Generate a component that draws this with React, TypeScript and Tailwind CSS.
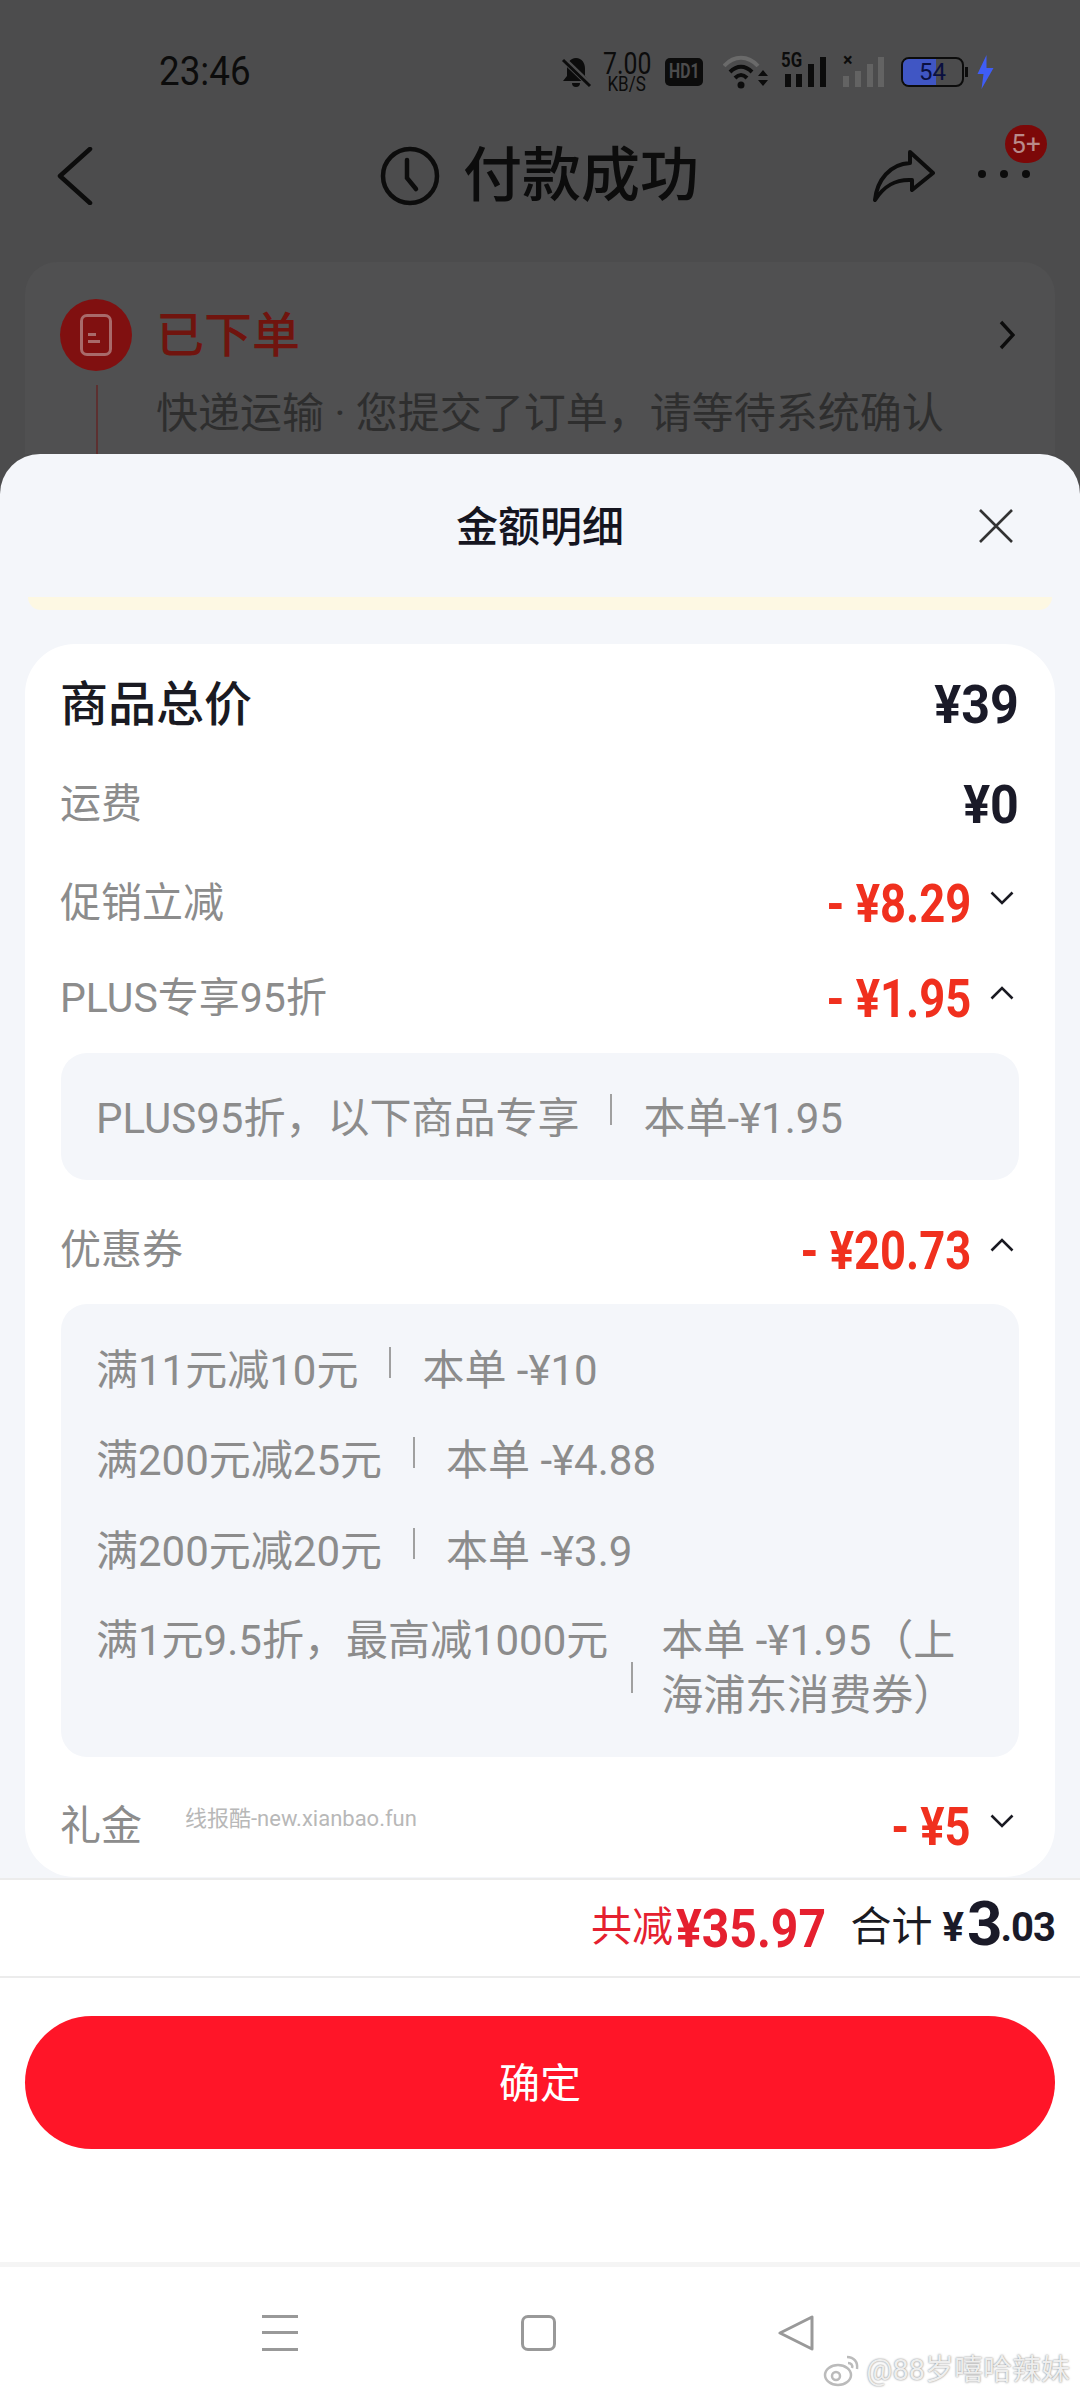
import React from 'react';

const Chevron = ({ up }: { up?: boolean }) => (
  <svg width="24" height="14" viewBox="0 0 24 14" fill="none" stroke="#1a1a22" strokeWidth="2.6" className="ml-[19px] mr-[5px] mt-[-8px]">
    <path d={up ? 'M1.5 12.5 12 2l10.5 10.5' : 'M1.5 1.5 12 12 22.5 1.5'} />
  </svg>
);

const Row = ({ label, value, up, black, big, children }: { label: string; value: string; up?: boolean; black?: boolean; big?: boolean; children?: React.ReactNode }) => (
  <div className="flex h-full items-center justify-between">
    <div className="ml-[-1px] flex items-center">
      <span className={big ? 'pt-[3px] text-[48px] font-medium text-[#1a1a22]' : 'pt-[3px] text-[41px] text-[#8c8c8c]'}>{label}</span>
      {children}
    </div>
    <div className="flex items-center">
      <span className={`origin-right pt-[2px] text-[54px] font-bold ${black ? 'scale-x-[0.93] text-[#1a1a28]' : 'scale-x-[0.84] text-[#f0301e]'}`}>{value}</span>
      {!black && <Chevron up={up} />}
    </div>
  </div>
);

const Sep = ({ low }: { low?: boolean }) => (
  <div className={`h-[31px] w-[2px] shrink-0 bg-[#a0a0a0] ${low ? 'ml-[23px] mr-[28px] mt-[18px]' : 'mx-[31px] mt-[-14px]'}`} />
);

const Coupon = ({ left, right }: { left: string; right: string }) => (
  <div className="flex h-[60px] items-center text-[42px] text-[#8c8c8c]">
    <span className="pt-[3px]">{left}</span>
    <Sep />
    <span className="pt-[3px]">{right}</span>
  </div>
);

const StatusBar = () => (
  <div className="flex h-[144px] items-center pl-[159px] pr-[85px] text-[#0c0c0c]">
    <span className="origin-left scale-x-[0.92] text-[40px]">23:46</span>
    <div className="ml-auto flex items-center">
      <svg width="34" height="36" viewBox="0 0 34 34" fill="#0c0c0c">
        <path d="M17 3c-6 0-9 5-9 11v7l-4 5h26l-4-5v-7c0-6-3-11-9-11zM13 28a4 4 0 0 0 8 0z" />
        <path d="M4 4l27 26" stroke="#4c4c4d" strokeWidth="6" />
        <path d="M4 5l27 26" stroke="#0c0c0c" strokeWidth="3" />
      </svg>
      <div className="ml-[9px] flex w-[50px] flex-col items-center leading-none">
        <span className="scale-x-[0.8] text-[31px] leading-[24px]">7.00</span>
        <span className="scale-x-[0.85] text-[20px] leading-[17px]">KB/S</span>
      </div>
      <div className="ml-[13px] flex h-[28px] w-[38px] items-center justify-center rounded-[5px] bg-[#0c0c0c] text-[21px] font-bold text-[#4c4c4d]">
        <span className="scale-x-[0.75]">HD1</span>
      </div>
      <svg width="46" height="34" viewBox="0 0 46 34" fill="none" className="ml-[20px]">
        <path d="M1 11C11 0 25 0 35 11" stroke="#6a6a6a" strokeWidth="4" />
        <path d="M7 17c7-7 15-7 22 0" stroke="#0c0c0c" strokeWidth="4" />
        <path d="M12 23c4-4 8-4 12 0" stroke="#0c0c0c" strokeWidth="4" />
        <circle cx="18" cy="30" r="3.5" fill="#0c0c0c" />
        <path d="M35 21l5-6 5 6zM35 25l5 6 5-6z" fill="#0c0c0c" />
      </svg>
      <div className="relative ml-[12px] h-[34px] w-[48px]">
        <span className="absolute left-0 top-[-5px] origin-left scale-x-[0.8] text-[21px] font-bold leading-[20px]">5G</span>
        <svg width="48" height="34" viewBox="0 0 48 34" fill="#0c0c0c">
          <rect x="4" y="19" width="6" height="13" /><rect x="15" y="19" width="6" height="13" /><rect x="27" y="9" width="6" height="23" /><rect x="39" y="2" width="6" height="30" />
        </svg>
      </div>
      <div className="relative ml-[13px] h-[34px] w-[44px]">
        <span className="absolute left-[1px] top-[-4px] text-[18px] font-bold leading-[18px]">×</span>
        <svg width="44" height="34" viewBox="0 0 44 34" fill="#636363">
          <rect x="1" y="21" width="6" height="11" /><rect x="13" y="16" width="6" height="16" /><rect x="25" y="9" width="6" height="23" /><rect x="36" y="2" width="6" height="30" />
        </svg>
      </div>
      <div className="relative ml-[15px] flex h-[30px] w-[63px] items-center justify-center overflow-hidden rounded-[8px] border-2 border-[#0c0c0c]">
        <div className="absolute inset-y-0 left-0 w-[33px] bg-[#4056c4]" />
        <span className="relative text-[24px] leading-none text-[#0a1040]">54</span>
      </div>
      <div className="ml-[1px] h-[10px] w-[3px] bg-[#0c0c0c]" />
      <svg width="19" height="34" viewBox="0 0 18 34" fill="#3f5df5" className="ml-[8px]">
        <path d="M10 0 1 19h6l-2 15L17 13h-7z" />
      </svg>
    </div>
  </div>
);

const NavBar = () => (
  <div className="relative flex h-[64px] items-center">
    <svg width="36" height="58" viewBox="0 0 36 58" fill="none" stroke="#0c0c0c" strokeWidth="4.5" strokeLinecap="round" strokeLinejoin="round" className="ml-[57px]">
      <path d="M33 2 3 29l30 27" />
    </svg>
    <svg width="60" height="60" viewBox="0 0 60 60" fill="none" stroke="#0c0c0c" strokeWidth="4.5" strokeLinecap="round" className="ml-[287px]">
      <circle cx="30" cy="30" r="27" />
      <path d="M27 14v18l9 11" />
    </svg>
    <span className="ml-[23px] text-[59px] font-medium text-[#0c0c0c]">付款成功</span>
    <svg width="62" height="52" viewBox="0 0 62 52" fill="none" stroke="#0c0c0c" strokeWidth="4" strokeLinejoin="round" className="ml-[174px]">
      <path d="M37 2 60 23 39 40V30C22 29 11 36 2 50 4 30 17 14 37 13z" />
    </svg>
    <div className="ml-[43px] mt-[-5px] flex gap-[14px]">
      <div className="h-[8px] w-[8px] rounded-full bg-[#0c0c0c]" />
      <div className="h-[8px] w-[8px] rounded-full bg-[#0c0c0c]" />
      <div className="h-[8px] w-[8px] rounded-full bg-[#0c0c0c]" />
    </div>
    <div className="absolute left-[1005px] top-[-19px] flex h-[38px] w-[42px] items-center justify-center rounded-full bg-[#7c0808] text-[26px] leading-none text-[#b98a8a]">5+</div>
  </div>
);

export default function App() {
  return (
    <div className="flex h-[2400px] w-[1080px] flex-col overflow-hidden bg-[#4c4c4d] font-[Roboto,'Noto_Sans_CJK_SC',sans-serif]">
      <div className="h-[454px] shrink-0 overflow-hidden">
        <StatusBar />
        <NavBar />
        <div className="mx-[25px] mt-[54px] h-[300px] rounded-t-[32px] bg-[#505051] pr-[40px] pt-[36px]">
          <div className="flex items-center pl-[35px]">
            <div className="flex h-[72px] w-[72px] items-center justify-center rounded-full bg-[#801010]">
              <div className="flex h-[42px] w-[32px] flex-col justify-center gap-[4px] rounded-[7px] border-[3px] border-[#a86a6a] pl-[5px] pt-[6px]">
                <div className="h-[3px] w-[8px] bg-[#a86a6a]" />
                <div className="h-[3px] w-[12px] bg-[#a86a6a]" />
              </div>
            </div>
            <span className="ml-[24px] pt-[2px] text-[48px] font-medium text-[#70140e]">已下单</span>
            <svg width="16" height="30" viewBox="0 0 16 30" fill="none" stroke="#0c0c0c" strokeWidth="3.4" className="ml-auto">
              <path d="M2 2l12 13L2 28" />
            </svg>
          </div>
          <div className="mt-[13px] flex">
            <div className="ml-[71px] h-[80px] w-[2px] bg-[#5c3030]" />
            <span className="ml-[58px] pt-[4px] text-[42px] leading-[50px] text-[#2e2e2e]">快递运输 · 您提交了订单，请等待系统确认</span>
          </div>
        </div>
      </div>

      <div className="flex flex-1 flex-col overflow-hidden rounded-t-[40px] bg-[#f4f6fa]">
        <div className="relative flex h-[143px] shrink-0 items-center justify-center pt-[3px]">
          <span className="text-[42px] font-medium text-[#15151f]">金额明细</span>
          <svg width="34" height="34" viewBox="0 0 34 34" fill="none" stroke="#333" strokeWidth="2.6" className="absolute right-[67px] top-[55px]">
            <path d="M1 1l32 32M33 1 1 33" />
          </svg>
        </div>
        <div className="mx-[28px] h-[13px] shrink-0 rounded-b-[13px] bg-[#fdf8e3]" />

        <div className="mx-[25px] mt-[34px] shrink-0 rounded-[50px] bg-white px-[36px] pb-[7px] pt-[9px]">
          <div className="h-[100px]"><Row label="商品总价" value="¥39" black big /></div>
          <div className="h-[100px]"><Row label="运费" value="¥0" black /></div>
          <div className="h-[98px]"><Row label="促销立减" value="- ¥8.29" /></div>
          <div className="h-[92px]"><Row label="PLUS专享95折" value="- ¥1.95" up /></div>
          <div className="mt-[10px] flex h-[127px] items-center rounded-[26px] bg-[#f4f6fa] px-[35px] text-[42px] text-[#8c8c8c]">
            <span className="pt-[3px]">PLUS95折，以下商品专享</span>
            <Sep />
            <span className="pt-[3px]">本单-¥1.95</span>
          </div>
          <div className="mt-[24px] h-[90px]"><Row label="优惠券" value="- ¥20.73" up /></div>
          <div className="mt-[10px] h-[453px] rounded-[26px] bg-[#f4f6fa] px-[35px] pt-[35px]">
            <Coupon left="满11元减10元" right="本单 -¥10" />
            <div className="mt-[30px]"><Coupon left="满200元减25元" right="本单 -¥4.88" /></div>
            <div className="mt-[31px]"><Coupon left="满200元减20元" right="本单 -¥3.9" /></div>
            <div className="mt-[33px] flex items-center text-[42px] leading-[55px] text-[#8c8c8c]">
              <span className="mt-[-55px] shrink-0">满1元9.5折，最高减1000元</span>
              <Sep low />
              <span>本单 -¥1.95（上海浦东消费券）</span>
            </div>
          </div>
          <div className="mt-[23px] h-[90px]">
            <Row label="礼金" value="- ¥5">
              <span className="ml-[43px] mt-[-14px] text-[22px] text-[#b8b8b8]">线报酷-new.xianbao.fun</span>
            </Row>
          </div>
        </div>

        <div className="mt-[1px] flex-1 bg-white">
          <div className="flex h-[100px] items-center justify-end border-y-2 border-[#ececec] pr-[25px]">
            <span className="text-[41px] text-[#e5202f]">共减</span>
            <span className="ml-[3px] mr-[-19px] origin-left scale-x-[0.89] text-[54px] font-bold text-[#e5202f]">¥35.97</span>
            <span className="ml-[25px] text-[41px] text-[#1a1a22]">合计</span>
            <span className="ml-[10px] text-[40px] font-bold text-[#1a1a28]">¥</span>
            <span className="mt-[-8px] ml-[3px] text-[62px] font-bold leading-none tracking-[-2px] text-[#1a1a28]">3</span>
            <span className="text-[40px] font-bold tracking-[-1px] text-[#1a1a28]">.03</span>
          </div>
          <div className="mx-[25px] mt-[38px] flex h-[133px] items-center justify-center rounded-full bg-[#ff1528] pt-[5px] text-[41px] text-white">确定</div>
          <div className="mt-[113px] h-[5px] bg-[#f5f5f5]" />
          <div className="relative flex h-[131px] items-center">
            <div className="ml-[262px] flex h-[36px] w-[36px] flex-col justify-between">
              <div className="h-[3px] bg-[#999]" />
              <div className="h-[3px] bg-[#999]" />
              <div className="h-[3px] bg-[#999]" />
            </div>
            <div className="ml-[223px] h-[36px] w-[35px] rounded-[7px] border-[3px] border-[#999]" />
            <svg width="36" height="36" viewBox="0 0 36 36" fill="none" stroke="#999" strokeWidth="3" strokeLinejoin="round" className="ml-[222px]">
              <path d="M34 2v32L2 18z" />
            </svg>
            <div className="absolute bottom-[6px] right-[10px] flex items-center text-[29px] text-[#eeeeee] [text-shadow:0_0_2px_#777]">
              <svg width="38" height="36" viewBox="0 0 38 36" fill="none" stroke="#bbb" strokeWidth="2.5" className="mr-[5px]">
                <ellipse cx="15" cy="23" rx="13" ry="10" />
                <circle cx="13" cy="24" r="4" />
                <path d="M24 5c7 0 11 5 10 12M25 11c3 0 5 2 4 5" />
              </svg>
              <span>@88岁嘻哈辣妹</span>
            </div>
          </div>
        </div>
      </div>
    </div>
  );
}
